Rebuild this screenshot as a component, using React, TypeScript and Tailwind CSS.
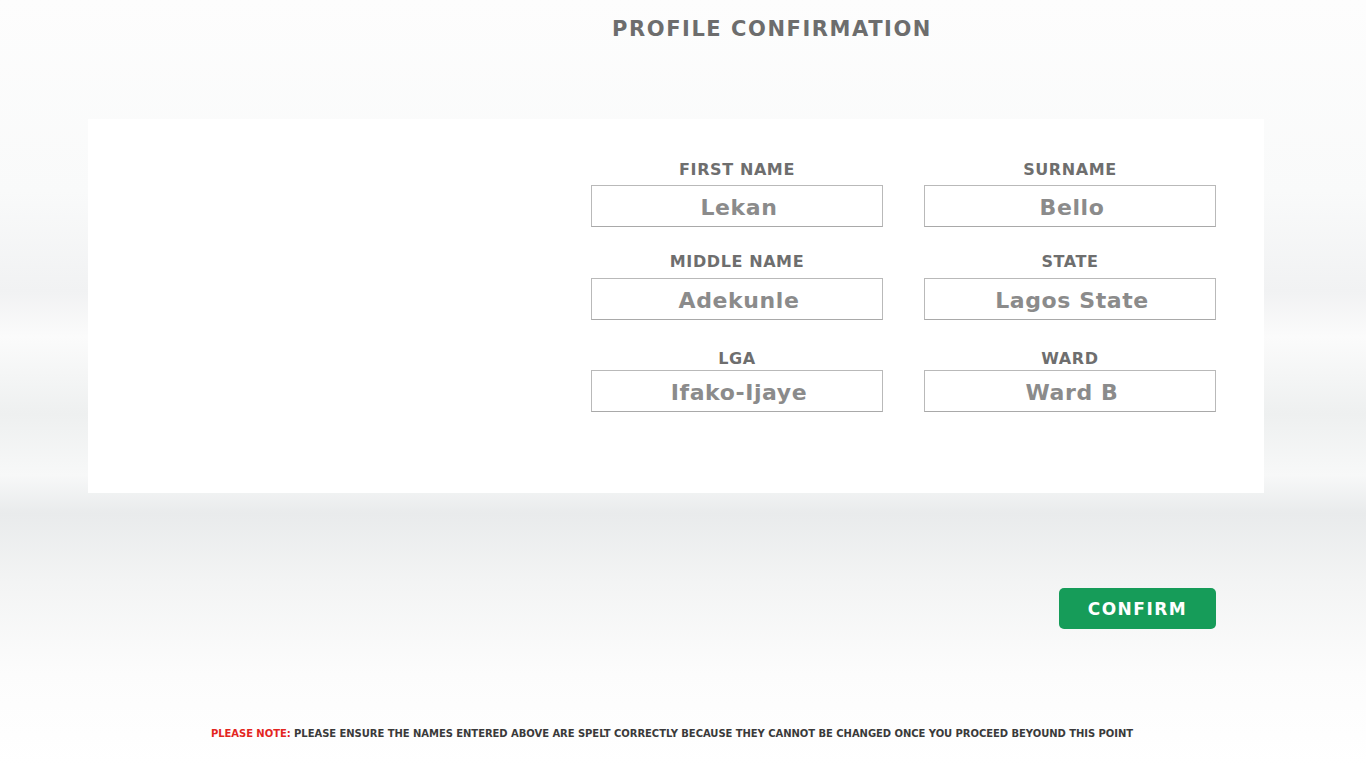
import React from "react";

const fields = [
  [
    { label: "FIRST NAME", value: "Lekan" },
    { label: "SURNAME", value: "Bello" },
  ],
  [
    { label: "MIDDLE NAME", value: "Adekunle" },
    { label: "STATE", value: "Lagos State" },
  ],
  [
    { label: "LGA", value: "Ifako-Ijaye" },
    { label: "WARD", value: "Ward B" },
  ],
];

const rowStyles = [
  { row: "mt-0", label: "mb-[4px]" },
  { row: "mt-[24px]", label: "mb-[5px]" },
  { row: "mt-[28px]", label: "mb-0" },
];

const Field: React.FC<{ label: string; value: string; labelClass: string }> = ({ label, value, labelClass }) => (
  <div className="flex flex-col items-center w-[292px]">
    <span className={`text-[16px] leading-[22px] font-bold tracking-[0.6px] text-[#6e6e6e] ${labelClass}`}>{label}</span>
    <div className="w-[292px] h-[42px] border border-[#b9b9b9] border-b-[#a9a9a9] bg-white flex items-center justify-center">
      <span className="text-[22px] font-bold tracking-[0.6px] text-[#8b8b8b] pl-[4px] pt-[2px]">{value}</span>
    </div>
  </div>
);

const App: React.FC = () => {
  return (
    <div
      className="relative w-full h-[766px] overflow-hidden flex flex-col bg-[linear-gradient(180deg,#fdfdfd_0%,#f9fafa_25%,#f1f2f3_38%,#fbfbfb_44%,#eef0f0_54%,#f7f8f8_62%,#e9ebec_67%,#f3f4f4_76%,#fcfcfc_88%,#ffffff_100%)]"
      style={{ fontFamily: '"DejaVu Sans", "Open Sans", sans-serif' }}
    >
      {/* Title */}
      <div className="w-full flex justify-center pl-[178px] pt-[15px]">
        <h1 className="text-[21px] leading-[28px] font-bold tracking-[1.55px] text-[#6d6d6d]">PROFILE CONFIRMATION</h1>
      </div>

      {/* Card */}
      <div className="ml-[88px] mt-[76px] w-[1176px] h-[374px] bg-white flex justify-end pr-[48px] pt-[40px]">
        <div className="flex flex-col">
          {fields.map((row, i) => (
            <div key={i} className={`flex gap-[41px] ${rowStyles[i].row}`}>
              {row.map((f) => (
                <Field key={f.label} label={f.label} value={f.value} labelClass={rowStyles[i].label} />
              ))}
            </div>
          ))}
        </div>
      </div>

      {/* Confirm button */}
      <div className="ml-[88px] w-[1176px] flex justify-end pr-[48px] mt-[95px]">
        <button className="w-[157px] h-[41px] rounded-[5px] bg-[#169c59] text-white text-[17px] font-bold tracking-[1.5px] pt-[2px]">
          CONFIRM
        </button>
      </div>

      {/* Note */}
      <div className="w-full flex justify-center pr-[22px] mt-[98px]">
        <p className="text-[10px] leading-[14px] font-bold tracking-[-0.05px] text-[#3a3a3a]">
          <span className="text-[#e3261f]">PLEASE NOTE:</span> PLEASE ENSURE THE NAMES ENTERED ABOVE ARE SPELT CORRECTLY BECAUSE THEY CANNOT BE CHANGED ONCE YOU PROCEED BEYOUND THIS POINT
        </p>
      </div>
    </div>
  );
};

export default App;
